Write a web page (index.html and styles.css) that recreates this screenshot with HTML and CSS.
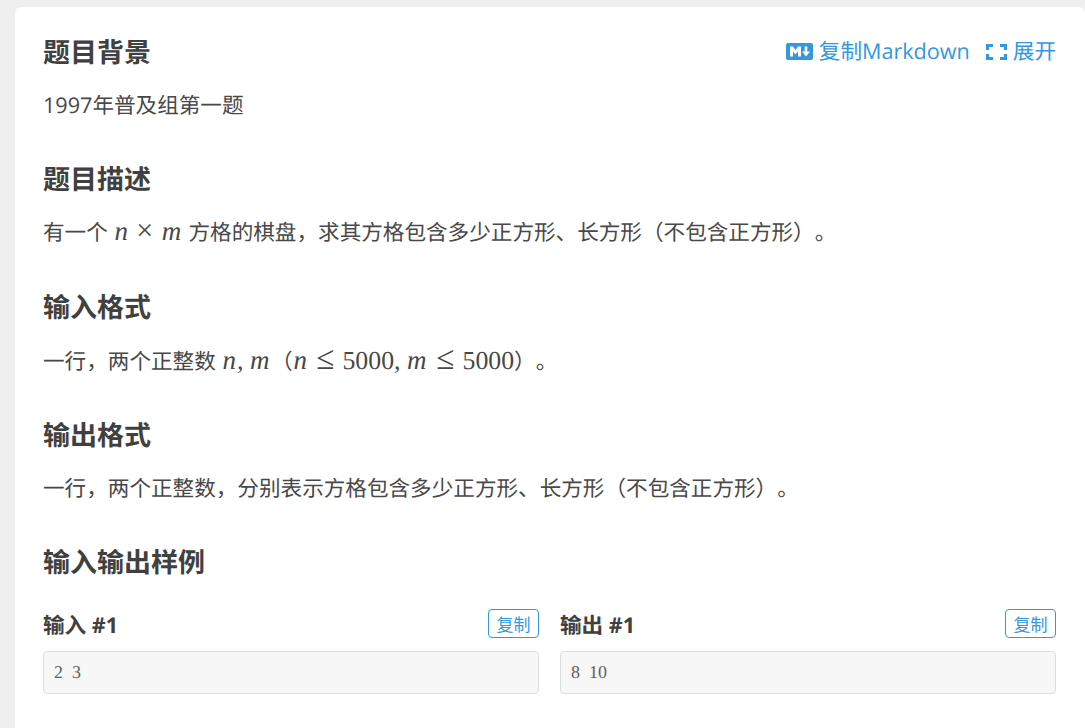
FILE: index.html
```html
<!DOCTYPE html>
<html lang="zh-CN">
<head>
<meta charset="utf-8">
<title>题目</title>
<link rel="stylesheet" href="styles.css">
</head>
<body>
<main class="card">
  <section class="section">
    <div class="head-row">
      <h2 class="title">题目背景</h2>
      <div class="actions">
        <a class="action action-md">
          <svg class="icon-md" viewBox="0 0 27 17" aria-hidden="true"><rect width="27" height="17" rx="2" fill="#3498db"/><path d="M4 13.500V3.500h3l2.500 3.500L12 3.500h3v10h-3V8.500L9.500 11.500 7 8.500v5z" fill="#fff"/><path d="M18.700 3.500h2.600v5h2.700l-4 5-4-5h2.700z" fill="#fff"/></svg>
          <span>复制Markdown</span>
        </a>
        <a class="action">
          <svg class="icon-expand" viewBox="0 0 21 16" aria-hidden="true"><path d="M1.500 6V1.500H7M14 1.500h5.500V6M19.500 10v4.500H14M7 14.500H1.500V10" fill="none" stroke="#3498db" stroke-width="3"/></svg>
          <span>展开</span>
        </a>
      </div>
    </div>
    <p class="text">1997年普及组第一题</p>
  </section>
  <section class="section">
    <h2 class="title">题目描述</h2>
    <p class="text">有一个 <span class="math"><i class="mi-n">n</i><span class="bin">×</span><i class="mi-m">m</i></span> 方格的棋盘，求其方格包含多少正方形、长方形（不包含正方形）。</p>
  </section>
  <section class="section">
    <h2 class="title">输入格式</h2>
    <p class="text">一行，两个正整数 <span class="math"><i class="mi-n">n</i><span class="comma">,</span><i class="mi-m">m</i></span>（<span class="math"><i class="mi-n">n</i><span class="rel">≤</span>5000<span class="comma">,</span><i class="mi-m">m</i><span class="rel">≤</span>5000</span>）。</p>
  </section>
  <section class="section">
    <h2 class="title">输出格式</h2>
    <p class="text">一行，两个正整数，分别表示方格包含多少正方形、长方形（不包含正方形）。</p>
  </section>
  <section class="section section-samples">
    <h2 class="title">输入输出样例</h2>
    <div class="samples">
      <div class="sample">
        <div class="sample-head"><h3 class="label">输入 #1</h3><button class="copy">复制</button></div>
        <pre class="code">2 3</pre>
      </div>
      <div class="sample">
        <div class="sample-head"><h3 class="label">输出 #1</h3><button class="copy">复制</button></div>
        <pre class="code">8 10</pre>
      </div>
    </div>
  </section>
</main>
</body>
</html>
```
FILE: styles.css
```css
html, body {
  margin: 0;
  height: 100%;
  overflow: hidden;
}
body {
  background: #efefef;
  padding: 7px 0 0 15px;
  box-sizing: border-box;
  font-family: "Open Sans", "Noto Sans CJK SC", sans-serif;
  font-size: 21.6px;
  color: #484848;
  text-rendering: geometricPrecision;
  text-spacing-trim: space-all;
}
.card {
  background: #fff;
  border-radius: 6px 6px 0 0;
  padding: 26.5px 29px 0 28px;
  height: 721px;
  box-sizing: border-box;
  overflow: hidden;
}
.section {
  margin-bottom: 37.7px;
}
.section-samples {
  margin-bottom: 0;
}
.head-row {
  display: flex;
  justify-content: space-between;
  align-items: flex-start;
}
.title {
  margin: 0;
  height: 36px;
  font-size: 27px;
  line-height: 36px;
  font-weight: 700;
  color: #404040;
}
.text {
  margin: 18px 0 0;
  height: 36px;
  line-height: 36px;
  white-space: nowrap;
}
.actions {
  display: flex;
  align-items: center;
  gap: 16px;
  line-height: 36px;
  color: #3498db;
}
.action {
  display: flex;
  align-items: center;
  gap: 6px;
}
.icon-md {
  width: 27px;
  height: 17px;
  display: block;
}
.icon-expand {
  width: 21px;
  height: 16px;
  display: block;
}
.math {
  font-family: "Liberation Serif", serif;
  font-size: 25.8px;
  line-height: 1;
}
.mi-n, .mi-m {
  display: inline-block;
  text-align: center;
  font-size: 27px;
  line-height: 1;
}
.mi-n {
  width: 15.5px;
}
.mi-m {
  width: 22.6px;
}
.bin, .rel {
  display: inline-block;
  width: 20px;
  text-align: center;
  line-height: 1;
}
.bin {
  margin: 0 5.7px;
  font-size: 30px;
}
.rel {
  margin: 0 7.2px;
  font-size: 33px;
}
.comma {
  display: inline-block;
  width: 7.2px;
  margin-right: 4.3px;
  line-height: 1;
}
.samples {
  display: grid;
  grid-template-columns: 1fr 1fr;
  column-gap: 21px;
  margin-top: 29px;
}
.sample {
  min-width: 0;
}
.sample-head {
  display: flex;
  justify-content: space-between;
  align-items: flex-start;
  height: 29px;
}
.label {
  margin: 0;
  padding-top: 2px;
  font-size: 21.6px;
  font-weight: 700;
  line-height: 29px;
  color: #404040;
}
.copy {
  width: 51px;
  height: 29px;
  padding: 0;
  background: #fff;
  border: 1px solid #3498db;
  border-radius: 4px;
  color: #3498db;
  font-family: "Noto Sans CJK SC", sans-serif;
  font-size: 17px;
  line-height: 27px;
}
.code {
  margin: 13px 0 0;
  height: 43px;
  box-sizing: border-box;
  padding: 0 10px;
  background: #f7f7f7;
  border: 1px solid #dfdfdf;
  border-radius: 4px;
  font-family: "Liberation Serif", serif;
  font-size: 18px;
  word-spacing: 4.5px;
  line-height: 41px;
  color: #606060;
}
```
